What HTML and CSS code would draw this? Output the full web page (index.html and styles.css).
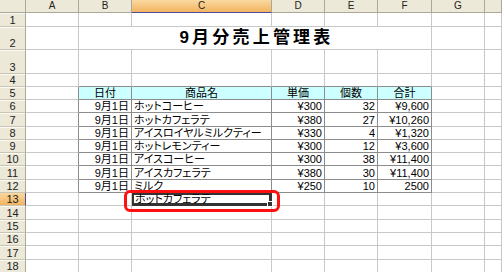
FILE: index.html
```html
<!DOCTYPE html>
<html lang="ja">
<head>
<meta charset="utf-8">
<title>9月分売上管理表</title>
<link rel="stylesheet" href="styles.css">
</head>
<body>
<div class="sheet">
  <div class="ch corner"></div><div class="ch">A</div><div class="ch">B</div><div class="ch sel">C</div><div class="ch">D</div><div class="ch">E</div><div class="ch">F</div><div class="ch">G</div><div class="ch">&nbsp;</div>

  <div class="rh">1</div><div class="c"></div><div class="c"></div><div class="c"></div><div class="c"></div><div class="c"></div><div class="c"></div><div class="c"></div><div class="c"></div>

  <div class="rh">2</div><div class="c"></div><div class="c title">9月分売上管理表</div><div class="c"></div><div class="c"></div>

  <div class="rh">3</div><div class="c"></div><div class="c"></div><div class="c"></div><div class="c"></div><div class="c"></div><div class="c"></div><div class="c"></div><div class="c"></div>

  <div class="rh">4</div><div class="c"></div><div class="c bb"></div><div class="c bb"></div><div class="c bb"></div><div class="c bb"></div><div class="c bb"></div><div class="c"></div><div class="c"></div>

  <div class="rh">5</div><div class="c br"></div><div class="c t th">日付</div><div class="c t th">商品名</div><div class="c t th">単価</div><div class="c t th">個数</div><div class="c t th">合計</div><div class="c"></div><div class="c"></div>

  <div class="rh">6</div><div class="c br"></div><div class="c t r">9月1日</div><div class="c t">ホットコーヒー</div><div class="c t r">¥300</div><div class="c t r">32</div><div class="c t r">¥9,600</div><div class="c"></div><div class="c"></div>

  <div class="rh">7</div><div class="c br"></div><div class="c t r">9月1日</div><div class="c t">ホットカフェラテ</div><div class="c t r">¥380</div><div class="c t r">27</div><div class="c t r">¥10,260</div><div class="c"></div><div class="c"></div>

  <div class="rh">8</div><div class="c br"></div><div class="c t r">9月1日</div><div class="c t">アイスロイヤルミルクティー</div><div class="c t r">¥330</div><div class="c t r">4</div><div class="c t r">¥1,320</div><div class="c"></div><div class="c"></div>

  <div class="rh">9</div><div class="c br"></div><div class="c t r">9月1日</div><div class="c t">ホットレモンティー</div><div class="c t r">¥300</div><div class="c t r">12</div><div class="c t r">¥3,600</div><div class="c"></div><div class="c"></div>

  <div class="rh">10</div><div class="c br"></div><div class="c t r">9月1日</div><div class="c t">アイスコーヒー</div><div class="c t r">¥300</div><div class="c t r">38</div><div class="c t r">¥11,400</div><div class="c"></div><div class="c"></div>

  <div class="rh">11</div><div class="c br"></div><div class="c t r">9月1日</div><div class="c t">アイスカフェラテ</div><div class="c t r">¥380</div><div class="c t r">30</div><div class="c t r">¥11,400</div><div class="c"></div><div class="c"></div>

  <div class="rh">12</div><div class="c br"></div><div class="c t r">9月1日</div><div class="c t">ミルク</div><div class="c t r">¥250</div><div class="c t r">10</div><div class="c t r">2500</div><div class="c"></div><div class="c"></div>

  <div class="rh sel">13</div><div class="c"></div><div class="c"></div><div class="c active">ホットカフェラテ</div><div class="c"></div><div class="c"></div><div class="c"></div><div class="c"></div><div class="c"></div>

  <div class="rh">14</div><div class="c"></div><div class="c"></div><div class="c"></div><div class="c"></div><div class="c"></div><div class="c"></div><div class="c"></div><div class="c"></div>
  <div class="rh">15</div><div class="c"></div><div class="c"></div><div class="c"></div><div class="c"></div><div class="c"></div><div class="c"></div><div class="c"></div><div class="c"></div>
  <div class="rh">16</div><div class="c"></div><div class="c"></div><div class="c"></div><div class="c"></div><div class="c"></div><div class="c"></div><div class="c"></div><div class="c"></div>
  <div class="rh">17</div><div class="c"></div><div class="c"></div><div class="c"></div><div class="c"></div><div class="c"></div><div class="c"></div><div class="c"></div><div class="c"></div>
  <div class="rh">18</div><div class="c"></div><div class="c"></div><div class="c"></div><div class="c"></div><div class="c"></div><div class="c"></div><div class="c"></div><div class="c"></div>

  <div class="callout"></div>
</div>
</body>
</html>
```

FILE: styles.css
```css
html, body {
  margin: 0;
  padding: 0;
  background: #ffffff;
  overflow: hidden;
}

.sheet {
  position: relative;
  width: 502px;
  height: 272px;
  display: grid;
  grid-template-columns: 26px 53px 53px 140px 53px 53px 54px 53px 17px;
  grid-template-rows: 13px 14px 23px 24px 13px 13px repeat(13, 13.3px);
  font-family: "Liberation Sans", "Noto Sans CJK JP", sans-serif;
  font-size: 11px;
  color: #000;
  overflow: hidden;
}

.ch {
  background: #ece9d8;
  border-right: 1px solid #aca899;
  border-bottom: 1px solid #aca899;
  box-sizing: border-box;
  font-size: 10px;
  line-height: 12px;
  text-align: center;
  color: #222;
}

.ch.sel {
  background: linear-gradient(#f9d99f, #f3b460);
  border-bottom: 1px solid #4b4b9a;
}

.rh {
  background: #ece9d8;
  border-right: 1px solid #aca899;
  border-bottom: 1px solid #c9c5b4;
  box-shadow: inset 0 1px 0 #fbfaf5;
  box-sizing: border-box;
  font-size: 11px;
  line-height: 12px;
  color: #222;
  display: flex;
  align-items: flex-end;
  justify-content: center;
}

.rh.sel {
  background: linear-gradient(#f9d99f, #f3b460);
  border-right: 1px solid #4b4b9a;
  box-shadow: none;
}

.c {
  border-right: 1px solid #c8c8c8;
  border-bottom: 1px solid #c8c8c8;
  box-sizing: border-box;
  display: flex;
  align-items: flex-end;
  padding: 0 2px;
  line-height: 12px;
  white-space: nowrap;
  overflow: visible;
  min-width: 0;
  font-feature-settings: "palt";
}

.title {
  grid-column: 3 / 8;
  justify-content: center;
  font-size: 17px;
  font-weight: bold;
  letter-spacing: 3.2px;
  padding-left: 5px;
  line-height: 20px;
  padding-bottom: 1px;
  font-feature-settings: normal;
}

.t {
  border-right-color: #8c8c8c;
  border-bottom-color: #8c8c8c;
}

.bb {
  border-bottom-color: #8c8c8c;
}

.br {
  border-right-color: #8c8c8c;
}

.th {
  background: #ccffff;
  justify-content: center;
  font-feature-settings: normal;
}

.r {
  justify-content: flex-end;
}

.active {
  position: relative;
  box-shadow: inset 0 0 0 2px #333;
  border-right-color: #333;
  border-bottom-color: #333;
  padding-left: 3px;
}

.active::after {
  content: "";
  position: absolute;
  right: -2px;
  bottom: -2px;
  width: 4px;
  height: 4px;
  background: #333;
  border: 1px solid #fff;
}

.callout {
  position: absolute;
  left: 124px;
  top: 190px;
  width: 156px;
  height: 22px;
  box-sizing: border-box;
  border: 3px solid #ff1010;
  border-radius: 6px;
  pointer-events: none;
}
```
